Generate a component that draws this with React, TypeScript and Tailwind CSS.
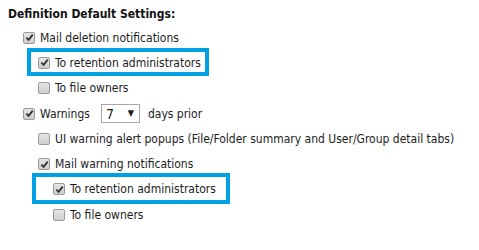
import React from "react";

type Level = 1 | 2 | 3;

const indent: Record<Level, string> = {
  1: "pl-[23px]",
  2: "pl-[38px]",
  3: "pl-[53px]",
};

function Box({ checked }: { checked?: boolean }) {
  return (
    <span className="flex h-[12px] w-[12px] shrink-0 items-center justify-center rounded-[2px] border border-[#9a9a9a] bg-gradient-to-b from-[#e4e4e4] to-[#cfcfcf]">
      {checked && (
        <svg viewBox="0 0 10 10" className="h-[9px] w-[9px]">
          <path d="M1.5 5.2 L4 7.6 L8.6 1.8" fill="none" stroke="#333" strokeWidth="2" />
        </svg>
      )}
    </span>
  );
}

function Row({
  level,
  checked,
  children,
  mark,
}: {
  level: Level;
  checked?: boolean;
  children: React.ReactNode;
  mark?: string;
}) {
  return (
    <div className={`relative flex h-[25.3px] items-center gap-[5px] ${indent[level]}`}>
      {mark && <span className={`pointer-events-none absolute border-4 border-[#00a1e4] ${mark}`} />}
      <Box checked={checked} />
      {children}
    </div>
  );
}

export default function App() {
  return (
    <div
      className="h-[250px] w-[479px] bg-white pt-[6px] text-[12px] text-[#1c1c1c]"
      style={{ fontFamily: "'DejaVu Sans Condensed', 'Noto Sans', sans-serif" }}
    >
      <div className="pl-[8px] text-[12px] font-bold leading-[17px] text-[#111]">
        Definition Default Settings:
      </div>
      <div className="mt-[2px]">
        <Row level={1} checked>
          <span>Mail deletion notifications</span>
        </Row>
        <Row level={2} checked mark="left-[27px] top-[-2px] h-[28px] w-[182px]">
          <span>To retention administrators</span>
        </Row>
        <Row level={2}>
          <span>To file owners</span>
        </Row>
        <Row level={1} checked>
          <span>Warnings</span>
          <span className="ml-[6px] flex h-[19px] w-[39px] items-center justify-between border border-[#a9a9a9] pl-[4px] pr-[5px] text-[14px] leading-none">
            <span>7</span>
            <span className="text-[9px]">▼</span>
          </span>
          <span className="ml-[3px]">days prior</span>
        </Row>
        <Row level={2}>
          <span>UI warning alert popups (File/Folder summary and User/Group detail tabs)</span>
        </Row>
        <Row level={2} checked>
          <span>Mail warning notifications</span>
        </Row>
        <Row level={3} checked mark="left-[32px] top-[-4px] h-[31px] w-[198px]">
          <span>To retention administrators</span>
        </Row>
        <Row level={3}>
          <span>To file owners</span>
        </Row>
      </div>
    </div>
  );
}
